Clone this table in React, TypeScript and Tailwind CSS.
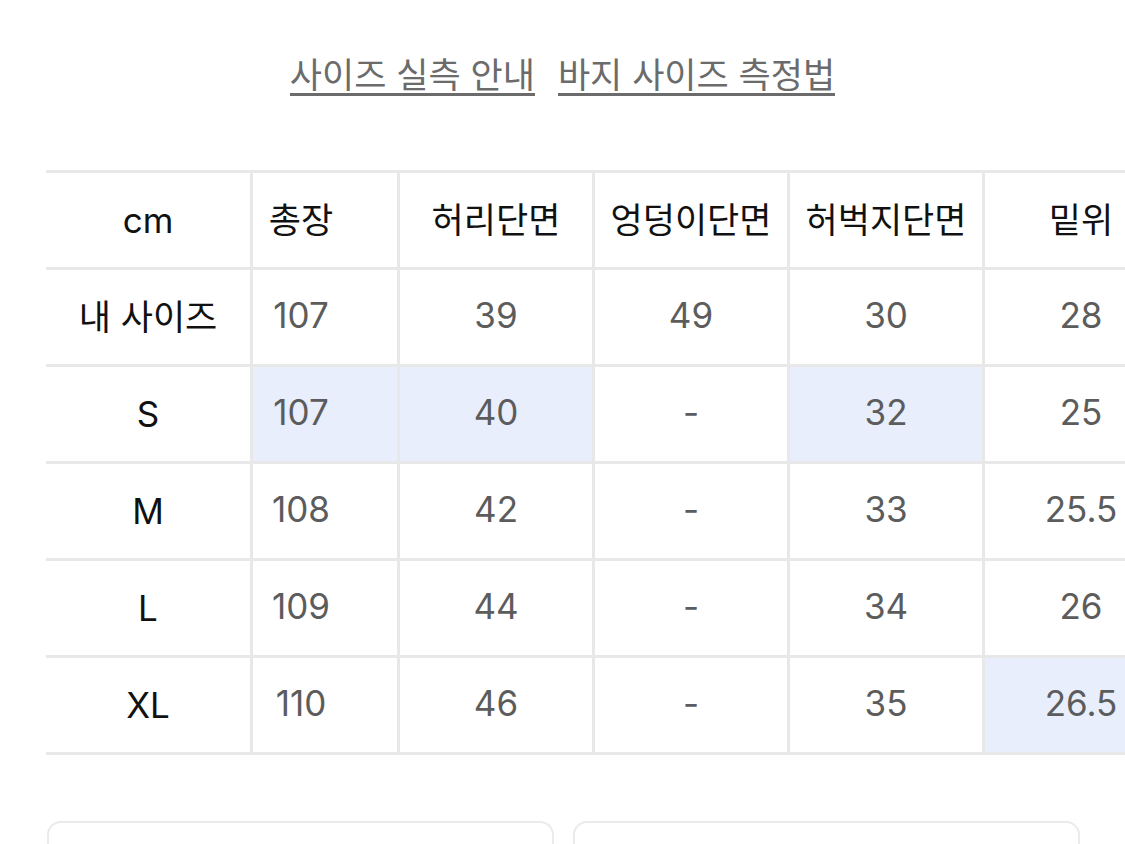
import React from 'react';

const font = { fontFamily: '"Inter", "Noto Sans CJK KR", sans-serif' };

const columns = ['총장', '허리단면', '엉덩이단면', '허벅지단면', '밑위'];

const rows = [
  { label: '내 사이즈', values: ['107', '39', '49', '30', '28'], hi: [] as number[] },
  { label: 'S', values: ['107', '40', '-', '32', '25'], hi: [0, 1, 3] },
  { label: 'M', values: ['108', '42', '-', '33', '25.5'], hi: [] as number[] },
  { label: 'L', values: ['109', '44', '-', '34', '26'], hi: [] as number[] },
  { label: 'XL', values: ['110', '46', '-', '35', '26.5'], hi: [4] },
];

export default function App() {
  return (
    <div className="w-[1125px] h-[844px] overflow-hidden bg-white" style={font}>
      {/* links */}
      <div className="flex justify-center gap-[23px] pt-[58px] text-[35px] leading-[35px] text-[#6b6b6b]">
        <a className="border-b-[3px] border-[#6b6b6b]">사이즈 실측 안내</a>
        <a className="border-b-[3px] border-[#6b6b6b]">바지 사이즈 측정법</a>
      </div>

      {/* table */}
      <div className="mt-[74px] flex pl-[46px]">
        <div className="w-[207px] shrink-0 border-r-[3px] border-[#e8e8e8]">
          <div className="h-[100px] flex items-center justify-center border-y-[3px] border-[#e8e8e8] text-[35px] text-[#111]">
            cm
          </div>
          {rows.map((r) => (
            <div
              key={r.label}
              className="h-[97px] flex items-center justify-center border-b-[3px] border-[#e8e8e8] text-[35px] text-[#111]"
            >
              {r.label}
            </div>
          ))}
        </div>
        <div className="flex-1 overflow-hidden">
          <div className="-ml-[48px] w-[975px]">
            <div className="flex border-y-[3px] border-[#e8e8e8] h-[100px]">
              {columns.map((c) => (
                <div
                  key={c}
                  className="w-[195px] shrink-0 flex items-center justify-center border-r-[3px] border-[#e8e8e8] text-[35px] text-[#111]"
                >
                  {c}
                </div>
              ))}
            </div>
            {rows.map((r) => (
              <div key={r.label} className="flex h-[97px] border-b-[3px] border-[#e8e8e8]">
                {r.values.map((v, i) => (
                  <div
                    key={i}
                    className={
                      r.hi.includes(i)
                        ? 'w-[195px] shrink-0 flex items-center justify-center pb-[4px] border-r-[3px] border-[#e8e8e8] bg-[#e8eefc] text-[35px] text-[#5c5c5c]'
                        : 'w-[195px] shrink-0 flex items-center justify-center pb-[4px] border-r-[3px] border-[#e8e8e8] text-[35px] text-[#5c5c5c]'
                    }
                  >
                    {v}
                  </div>
                ))}
              </div>
            ))}
          </div>
        </div>
      </div>

      {/* bottom boxes */}
      <div className="mt-[66px] flex gap-[19px] pl-[47px]">
        <div className="w-[507px] h-[80px] rounded-[14px] border-2 border-[#ebebeb]" />
        <div className="w-[507px] h-[80px] rounded-[14px] border-2 border-[#ebebeb]" />
      </div>
    </div>
  );
}
